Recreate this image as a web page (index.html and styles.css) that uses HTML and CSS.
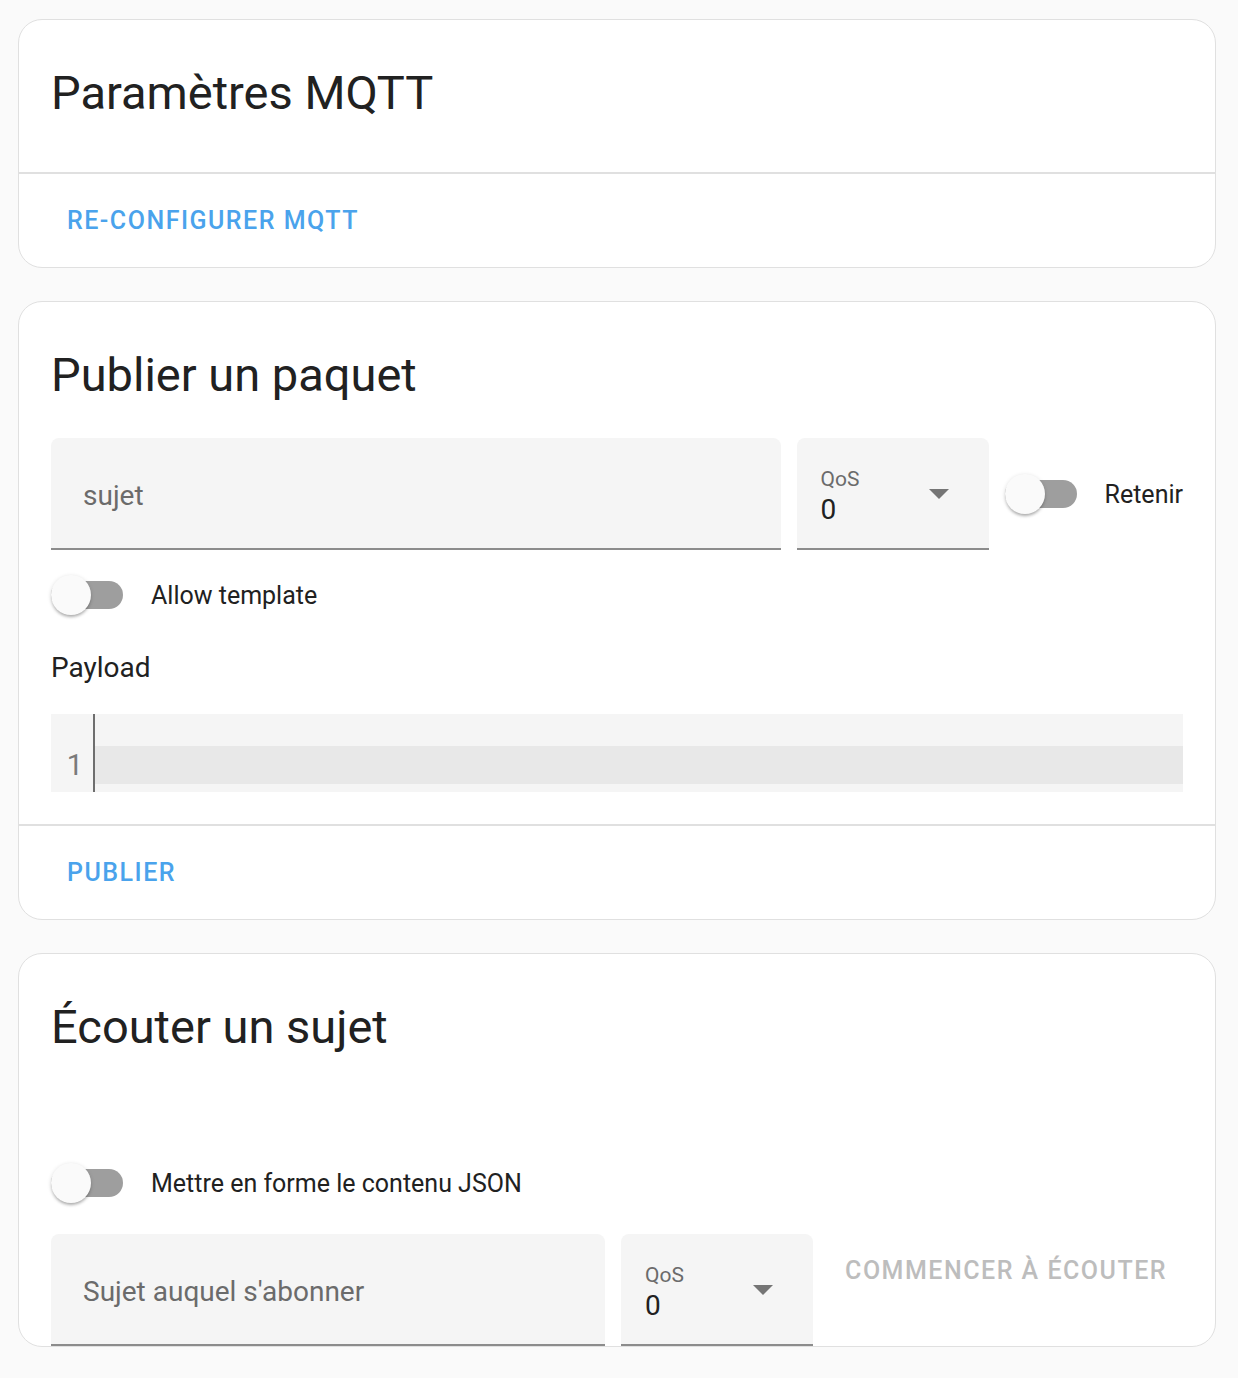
FILE: index.html
```html
<!DOCTYPE html>
<html lang="fr">
<head>
<meta charset="utf-8">
<link rel="stylesheet" href="styles.css">
</head>
<body>
<div class="page">
  <section class="card card-settings">
    <h1 class="card-title">Paramètres MQTT</h1>
    <div class="card-spacer"></div>
    <div class="card-actions">
      <span class="btn">RE-CONFIGURER MQTT</span>
    </div>
  </section>

  <section class="card">
    <h1 class="card-title">Publier un paquet</h1>
    <div class="card-body">
      <div class="row-fields">
        <div class="field field-grow"><span class="placeholder">sujet</span></div>
        <div class="field field-select">
          <div class="select-text"><span class="select-label">QoS</span><span class="select-value">0</span></div>
          <span class="arrow"></span>
        </div>
        <div class="formfield formfield-retain">
          <span class="switch"><span class="track"></span><span class="knob"></span></span>
          <span class="ff-label">Retenir</span>
        </div>
      </div>
      <div class="formfield formfield-row">
        <span class="switch"><span class="track"></span><span class="knob"></span></span>
        <span class="ff-label">Allow template</span>
      </div>
      <p class="payload-label">Payload</p>
      <div class="editor">
        <div class="gutter"><span class="line-no">1</span></div>
        <div class="code"><div class="active-line"></div></div>
      </div>
    </div>
    <div class="card-actions">
      <span class="btn">PUBLIER</span>
    </div>
  </section>

  <section class="card card-listen">
    <h1 class="card-title">Écouter un sujet</h1>
    <div class="card-body card-body-listen">
      <div class="formfield formfield-json">
        <span class="switch"><span class="track"></span><span class="knob"></span></span>
        <span class="ff-label">Mettre en forme le contenu JSON</span>
      </div>
      <div class="row-fields row-listen">
        <div class="field field-grow"><span class="placeholder">Sujet auquel s'abonner</span></div>
        <div class="field field-select">
          <div class="select-text"><span class="select-label">QoS</span><span class="select-value">0</span></div>
          <span class="arrow"></span>
        </div>
        <span class="btn btn-disabled">COMMENCER À ÉCOUTER</span>
      </div>
    </div>
  </section>
</div>
</body>
</html>
```

FILE: styles.css
```css
* { box-sizing: border-box; }
html, body {
  margin: 0;
  padding: 0;
  background: #fafafa;
  font-family: Roboto, "Noto Sans", sans-serif;
  color: #212121;
}
.page {
  padding: 19px 0 0 18px;
  width: 1216px;
  display: flex;
  flex-direction: column;
  gap: 33px;
}
.card {
  background: #fff;
  border: 1px solid #e0e0e0;
  border-radius: 24px;
  overflow: hidden;
}
.card-title {
  margin: 0;
  padding: 41px 32px 31px;
  font-size: 47px;
  line-height: 64px;
  font-weight: 400;
  color: #212121;
}
.card-spacer { height: 16px; }
.card-actions {
  border-top: 2px solid #e0e0e0;
  padding: 10px 16px 11px;
  display: flex;
}
.btn {
  display: inline-flex;
  align-items: center;
  height: 72px;
  padding: 0 16px 0 32px;
  font-size: 25px;
  font-weight: 500;
  letter-spacing: 1.5px;
  color: #4aa3ec;
  white-space: nowrap;
}
.btn-disabled {
  color: #bdbdbd;
  padding: 0 16px;
  align-self: flex-start;
}

.card-body { padding: 0 32px 32px; }
.card-body-listen { padding-bottom: 0; }

.row-fields {
  display: flex;
  align-items: center;
  gap: 16px;
}
.field {
  height: 112px;
  background: #f5f5f5;
  border-radius: 8px 8px 0 0;
  border-bottom: 2px solid #8c8c8c;
  display: flex;
  align-items: center;
  padding: 4px 32px 0;
}
.field-grow { flex: 1; }
.placeholder {
  font-size: 28px;
  color: #6b6b6b;
}
.field-select {
  width: 192px;
  flex: none;
  padding: 4px 24px 0 24px;
  justify-content: space-between;
}
.select-text {
  display: flex;
  flex-direction: column;
  padding-top: 6px;
}
.select-label {
  font-size: 21px;
  line-height: 24px;
  color: #6b6b6b;
}
.select-value {
  font-size: 28px;
  line-height: 38px;
  color: #212121;
}
.arrow {
  width: 0;
  height: 0;
  border-left: 10px solid transparent;
  border-right: 10px solid transparent;
  border-top: 10px solid #757575;
  margin-right: 16px;
  margin-top: -2px;
}

.formfield {
  display: flex;
  align-items: center;
}
.switch {
  position: relative;
  width: 72px;
  height: 40px;
  flex: none;
}
.track {
  position: absolute;
  left: 0;
  top: 6px;
  width: 72px;
  height: 28px;
  border-radius: 14px;
  background: #9e9e9e;
}
.knob {
  position: absolute;
  left: 0;
  top: 0;
  width: 40px;
  height: 40px;
  border-radius: 50%;
  background: #fafafa;
  box-shadow: 0 3px 3px -1px rgba(0,0,0,0.25), 0 1px 4px rgba(0,0,0,0.14);
}
.ff-label {
  font-size: 25px;
  color: #212121;
  margin-left: 28px;
  white-space: nowrap;
}
.formfield-row { margin-top: 25px; }
.payload-label {
  margin: 37px 0 0;
  font-size: 28px;
  line-height: 32px;
  color: #212121;
}
.editor {
  margin-top: 30px;
  height: 78px;
  background: #f5f5f5;
  display: flex;
}
.gutter {
  width: 44px;
  border-right: 2px solid #6e6e6e;
  display: flex;
  align-items: flex-end;
  justify-content: flex-end;
  padding: 0 10px 8px 0;
}
.line-no {
  font-size: 29px;
  line-height: 38px;
  color: #7a7a7a;
}
.code {
  flex: 1;
  padding-top: 32px;
}
.active-line {
  height: 38px;
  background: #e8e8e8;
}
.formfield-json { margin-top: 73px; }
.row-listen { margin-top: 31px; align-items: flex-start; }
```
